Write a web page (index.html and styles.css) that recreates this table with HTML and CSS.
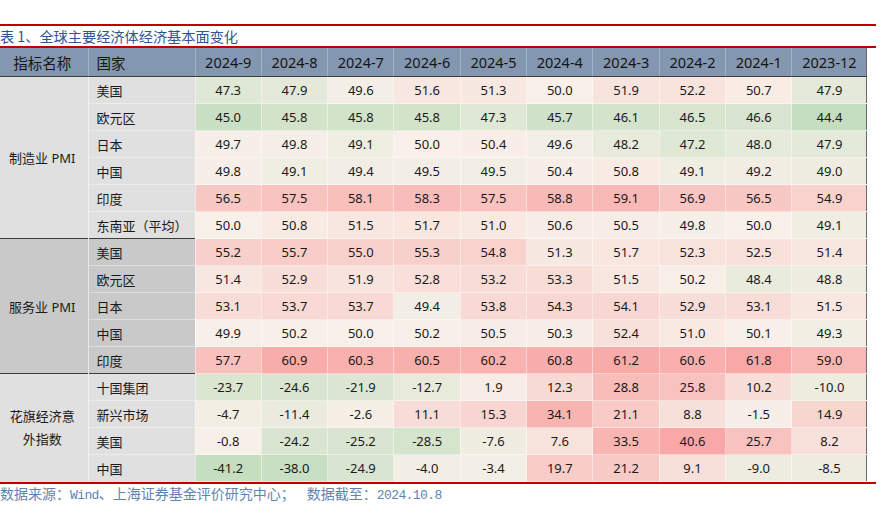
FILE: index.html
```html
<!DOCTYPE html>
<html lang="zh-CN">
<head>
<meta charset="utf-8">
<title>全球主要经济体经济基本面变化</title>
<link rel="stylesheet" href="styles.css">
</head>
<body>
<div class="report">
  <div class="title">表 1、全球主要经济体经济基本面变化</div>
  <table class="tbl">
    <colgroup>
      <col class="c-label"><col class="c-country">
      <col class="c-date"><col class="c-date"><col class="c-date"><col class="c-date"><col class="c-date">
      <col class="c-date"><col class="c-date"><col class="c-date"><col class="c-date">
      <col class="c-last">
    </colgroup>
    <thead>
      <tr>
        <th class="h-label">指标名称</th><th class="h-country">国家</th>
        <th>2024-9</th><th>2024-8</th><th>2024-7</th><th>2024-6</th><th>2024-5</th>
        <th>2024-4</th><th>2024-3</th><th>2024-2</th><th>2024-1</th><th>2023-12</th>
      </tr>
    </thead>
    <tbody class="grp grp-light" data-scale="pmi" data-mid="50">
      <tr><td class="label" rowspan="6">制造业 PMI</td><td class="country">美国</td><td class="v">47.3</td><td class="v">47.9</td><td class="v">49.6</td><td class="v">51.6</td><td class="v">51.3</td><td class="v">50.0</td><td class="v">51.9</td><td class="v">52.2</td><td class="v">50.7</td><td class="v">47.9</td></tr>
      <tr><td class="country">欧元区</td><td class="v">45.0</td><td class="v">45.8</td><td class="v">45.8</td><td class="v">45.8</td><td class="v">47.3</td><td class="v">45.7</td><td class="v">46.1</td><td class="v">46.5</td><td class="v">46.6</td><td class="v">44.4</td></tr>
      <tr><td class="country">日本</td><td class="v">49.7</td><td class="v">49.8</td><td class="v">49.1</td><td class="v">50.0</td><td class="v">50.4</td><td class="v">49.6</td><td class="v">48.2</td><td class="v">47.2</td><td class="v">48.0</td><td class="v">47.9</td></tr>
      <tr><td class="country">中国</td><td class="v">49.8</td><td class="v">49.1</td><td class="v">49.4</td><td class="v">49.5</td><td class="v">49.5</td><td class="v">50.4</td><td class="v">50.8</td><td class="v">49.1</td><td class="v">49.2</td><td class="v">49.0</td></tr>
      <tr><td class="country">印度</td><td class="v">56.5</td><td class="v">57.5</td><td class="v">58.1</td><td class="v">58.3</td><td class="v">57.5</td><td class="v">58.8</td><td class="v">59.1</td><td class="v">56.9</td><td class="v">56.5</td><td class="v">54.9</td></tr>
      <tr><td class="country">东南亚（平均）</td><td class="v">50.0</td><td class="v">50.8</td><td class="v">51.5</td><td class="v">51.7</td><td class="v">51.0</td><td class="v">50.6</td><td class="v">50.5</td><td class="v">49.8</td><td class="v">50.0</td><td class="v">49.1</td></tr>
    </tbody>
    <tbody class="grp grp-dark" data-scale="pmi" data-mid="50">
      <tr><td class="label" rowspan="5">服务业 PMI</td><td class="country">美国</td><td class="v">55.2</td><td class="v">55.7</td><td class="v">55.0</td><td class="v">55.3</td><td class="v">54.8</td><td class="v">51.3</td><td class="v">51.7</td><td class="v">52.3</td><td class="v">52.5</td><td class="v">51.4</td></tr>
      <tr><td class="country">欧元区</td><td class="v">51.4</td><td class="v">52.9</td><td class="v">51.9</td><td class="v">52.8</td><td class="v">53.2</td><td class="v">53.3</td><td class="v">51.5</td><td class="v">50.2</td><td class="v">48.4</td><td class="v">48.8</td></tr>
      <tr><td class="country">日本</td><td class="v">53.1</td><td class="v">53.7</td><td class="v">53.7</td><td class="v">49.4</td><td class="v">53.8</td><td class="v">54.3</td><td class="v">54.1</td><td class="v">52.9</td><td class="v">53.1</td><td class="v">51.5</td></tr>
      <tr><td class="country">中国</td><td class="v">49.9</td><td class="v">50.2</td><td class="v">50.0</td><td class="v">50.2</td><td class="v">50.5</td><td class="v">50.3</td><td class="v">52.4</td><td class="v">51.0</td><td class="v">50.1</td><td class="v">49.3</td></tr>
      <tr><td class="country">印度</td><td class="v">57.7</td><td class="v">60.9</td><td class="v">60.3</td><td class="v">60.5</td><td class="v">60.2</td><td class="v">60.8</td><td class="v">61.2</td><td class="v">60.6</td><td class="v">61.8</td><td class="v">59.0</td></tr>
    </tbody>
    <tbody class="grp grp-light" data-scale="citi" data-mid="0">
      <tr><td class="label label-2" rowspan="4">花旗经济意<br>外指数</td><td class="country">十国集团</td><td class="v">-23.7</td><td class="v">-24.6</td><td class="v">-21.9</td><td class="v">-12.7</td><td class="v">1.9</td><td class="v">12.3</td><td class="v">28.8</td><td class="v">25.8</td><td class="v">10.2</td><td class="v">-10.0</td></tr>
      <tr><td class="country">新兴市场</td><td class="v">-4.7</td><td class="v">-11.4</td><td class="v">-2.6</td><td class="v">11.1</td><td class="v">15.3</td><td class="v">34.1</td><td class="v">21.1</td><td class="v">8.8</td><td class="v">-1.5</td><td class="v">14.9</td></tr>
      <tr><td class="country">美国</td><td class="v">-0.8</td><td class="v">-24.2</td><td class="v">-25.2</td><td class="v">-28.5</td><td class="v">-7.6</td><td class="v">7.6</td><td class="v">33.5</td><td class="v">40.6</td><td class="v">25.7</td><td class="v">8.2</td></tr>
      <tr><td class="country">中国</td><td class="v">-41.2</td><td class="v">-38.0</td><td class="v">-24.9</td><td class="v">-4.0</td><td class="v">-3.4</td><td class="v">19.7</td><td class="v">21.2</td><td class="v">9.1</td><td class="v">-9.0</td><td class="v">-8.5</td></tr>
    </tbody>
  </table>
  <div class="source">数据来源：<span class="lat">Wind</span>、上海证券基金评价研究中心；<span class="gap"></span>数据截至：<span class="lat">2024.10.8</span></div>
</div>
<script src="script.js"></script>
</body>
</html>
```

FILE: styles.css
```css
html, body {
  margin: 0;
  padding: 0;
  background: #ffffff;
}

body {
  font-family: "Noto Sans", "Noto Sans CJK SC", sans-serif;
  color: #1a1a1a;
}

.report {
  margin: 24px 0 0 -3px;
  width: 879px;
}

.title {
  border-top: 2px solid #c00000;
  border-bottom: 2px solid #c00000;
  height: 20px;
  line-height: 20px;
  padding-left: 3px;
  font-family: "Noto Sans CJK SC", sans-serif;
  font-size: 14.2px;
  color: #2f5597;
  white-space: nowrap;
}

.tbl {
  border-collapse: collapse;
  table-layout: fixed;
  width: 870px;
  font-size: 13px;
  border-right: 1px solid #6b6b6b;
}

.c-label { width: 91px; }
.c-country { width: 107px; }
.c-date { width: 66.33px; }
.c-last { width: 75px; }

.tbl th {
  height: 28px;
  padding: 0;
  background: #8497b0;
  font-weight: normal;
  font-size: 14.5px;
  color: #151515;
  text-align: center;
  border-left: 1px solid #a4b2c6;
  border-bottom: 1px solid #3d3d3d;
  white-space: nowrap;
}

.tbl th.h-label { border-left: none; }
.tbl th.h-country { text-align: left; padding-left: 8px; }

.tbl td {
  height: 26px;
  padding: 0;
  white-space: nowrap;
}

.tbl td.v {
  text-align: center;
  border: 1px solid rgba(255, 255, 255, 0.45);
  border-right: none;
}

.tbl td.country {
  padding-left: 8px;
  border-top: 1px solid rgba(255, 255, 255, 0.4);
  border-left: 1px solid rgba(255, 255, 255, 0.55);
}

.tbl td.label {
  text-align: center;
  vertical-align: middle;
}

.tbl td.label-2 {
  line-height: 23px;
}

.grp-light td.label,
.grp-light td.country {
  background: #e0e0e0;
}

.grp-dark td.label,
.grp-dark td.country {
  background: #c9c9c9;
}

.tbl tbody + tbody tr:first-child td {
  border-top: 1px solid #3d3d3d;
}

.source {
  border-top: 2px solid #c00000;
  height: 18px;
  line-height: 18px;
  padding-left: 3px;
  font-family: "Noto Sans CJK SC", sans-serif;
  font-size: 14px;
  color: #6183b3;
  white-space: nowrap;
}

.source .lat {
  font-family: "Liberation Mono", monospace;
  font-size: 13px;
  letter-spacing: -0.6px;
}

.source .gap {
  display: inline-block;
  width: 12px;
}
```

FILE: script.js
```js
(function () {
  var MID = [248, 240, 233];
  var HI = [248, 168, 166];
  var LO = [197, 222, 192];
  var groups = {};
  document.querySelectorAll('tbody[data-scale]').forEach(function (tb) {
    var k = tb.getAttribute('data-scale');
    if (!groups[k]) {
      groups[k] = { mid: parseFloat(tb.getAttribute('data-mid')), cells: [] };
    }
    tb.querySelectorAll('td.v').forEach(function (td) { groups[k].cells.push(td); });
  });
  Object.keys(groups).forEach(function (k) {
    var g = groups[k];
    var vals = g.cells.map(function (td) { return parseFloat(td.textContent); });
    var mn = Math.min.apply(null, vals);
    var mx = Math.max.apply(null, vals);
    g.cells.forEach(function (td, i) {
      var v = vals[i], t, end;
      if (v >= g.mid) { t = (v - g.mid) / (mx - g.mid); end = HI; }
      else { t = (g.mid - v) / (g.mid - mn); end = LO; }
      var c = MID.map(function (m, j) { return Math.round(m + (end[j] - m) * t); });
      td.style.backgroundColor = 'rgb(' + c.join(',') + ')';
    });
  });
})();
```
